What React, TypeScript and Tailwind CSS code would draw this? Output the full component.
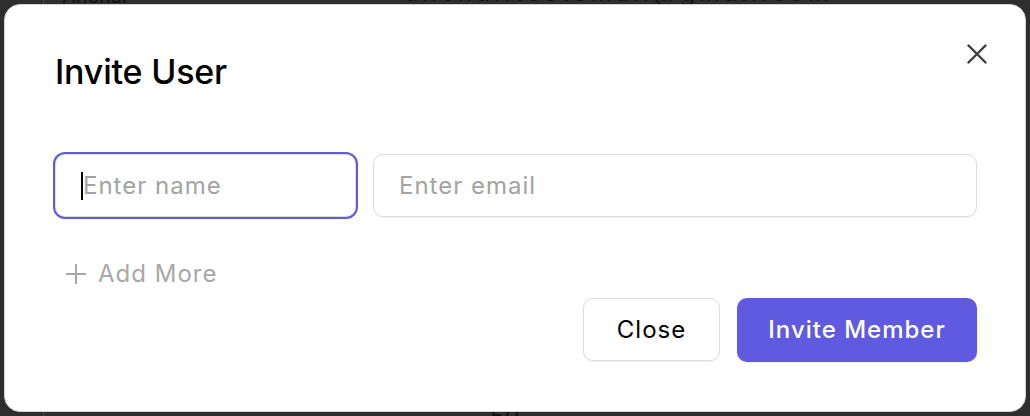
import React from "react";

export default function App() {
  return (
    <div
      className="relative h-[416px] w-[1030px] overflow-hidden bg-[#2e2e2e] p-[4px]"
      style={{ fontFamily: "Inter, 'Noto Sans', sans-serif" }}
    >
      {/* page content dimmed behind the dialog */}
      <div className="absolute inset-0 leading-[28px] text-[#111]">
        <div className="absolute left-[43px] top-0 h-full w-px bg-[#4a4a4a]" />
        <span className="absolute left-[62px] top-[-18px] text-[20px]">Anchal</span>
        <span className="absolute left-[405px] top-[-21px] text-[24px] tracking-[4px]">anchal.testemail@gmail.com</span>
        <span className="absolute left-[490px] top-[404px] text-[24px]">50</span>
      </div>

      <div className="relative flex h-full flex-col rounded-[16px] border border-[#d4d4d4] bg-white pl-[50px] pr-[48px] pt-[47px] pb-[48px]">
        <button className="absolute right-[38px] top-[39px] flex h-[20px] w-[20px] items-center justify-center text-[#3d3d3d]">
          <svg width="20" height="20" viewBox="0 0 20 20" fill="none" stroke="currentColor" strokeWidth="2.4" strokeLinecap="round">
            <path d="M1.5 1.5 18.5 18.5M18.5 1.5 1.5 18.5" />
          </svg>
        </button>

        <h2 className="text-[34px] font-medium leading-[40px] tracking-[-0.2px] text-black">Invite User</h2>

        <div className="mt-[62px] flex gap-[17px] text-[24px] leading-[32px] tracking-[1px]">
          <div className="flex h-[63px] w-[301px] items-center rounded-[10px] border-[1.5px] border-[#dcdcdc] px-[25px] shadow-[0_1px_1px_rgba(0,0,0,0.05)] outline-[2px] outline-solid outline-[#5f5ae0]">
            <span className="h-[28px] w-[2px] bg-black" />
            <span className="text-[#a3a3a3]">Enter name</span>
          </div>
          <div className="flex h-[63px] flex-1 items-center rounded-[10px] border-[1.5px] border-[#dcdcdc] px-[25px] shadow-[0_1px_1px_rgba(0,0,0,0.05)]">
            <span className="text-[#a3a3a3]">Enter email</span>
          </div>
        </div>

        <div className="mt-[41px] flex items-center pl-[11px] text-[24px] leading-[32px] tracking-[1px] text-[#a8a8a8]">
          <svg width="20" height="20" viewBox="0 0 20 20" fill="none" stroke="currentColor" strokeWidth="2" className="mr-[12px]">
            <path d="M10 0v20M0 10h20" />
          </svg>
          <span>Add More</span>
        </div>

        <div className="mt-[8px] flex justify-end gap-[17px] text-[24px] tracking-[1px]">
          <button className="flex h-[63px] w-[137px] items-center justify-center rounded-[10px] border-[1.5px] border-[#dcdcdc] bg-white text-black shadow-[0_1px_2px_rgba(0,0,0,0.06)]">
            Close
          </button>
          <button className="flex h-[64px] w-[240px] items-center justify-center rounded-[10px] bg-[#5f5ae0] font-medium text-white shadow-[0_1px_2px_rgba(0,0,0,0.08)]">
            Invite Member
          </button>
        </div>
      </div>
    </div>
  );
}
